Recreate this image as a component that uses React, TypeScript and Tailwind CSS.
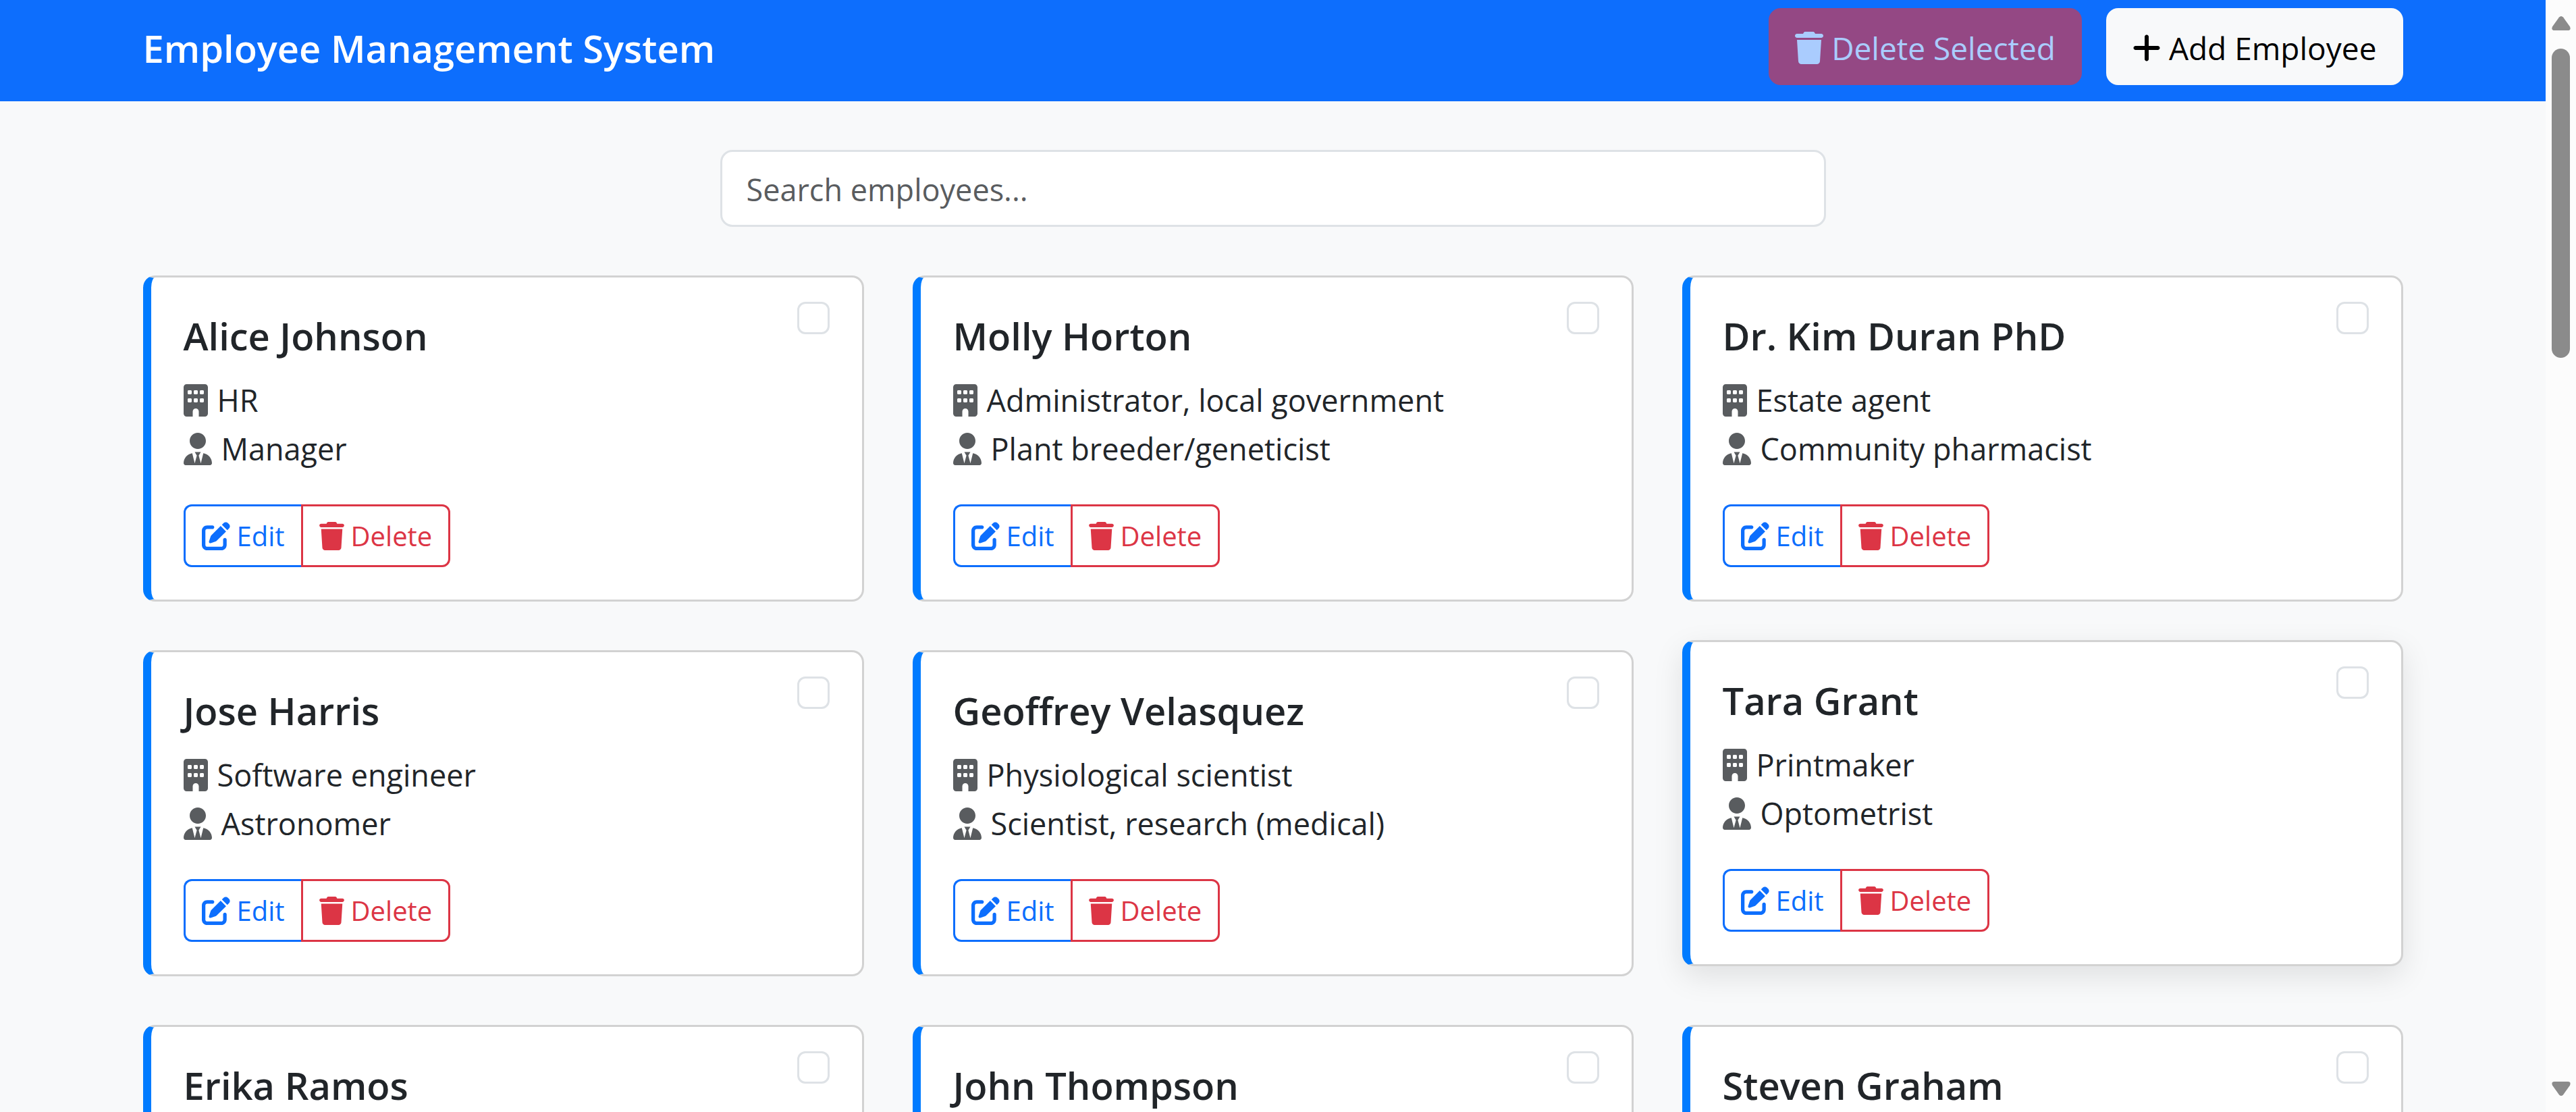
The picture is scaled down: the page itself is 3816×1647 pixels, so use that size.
import { FaBuilding, FaPenToSquare, FaPlus, FaTrash } from "react-icons/fa6";

type Employee = {
  name: string;
  department: string;
  position: string;
  raised?: boolean;
};

const employees: Employee[] = [
  { name: "Alice Johnson", department: "HR", position: "Manager" },
  { name: "Molly Horton", department: "Administrator, local government", position: "Plant breeder/geneticist" },
  { name: "Dr. Kim Duran PhD", department: "Estate agent", position: "Community pharmacist" },
  { name: "Jose Harris", department: "Software engineer", position: "Astronomer" },
  { name: "Geoffrey Velasquez", department: "Physiological scientist", position: "Scientist, research (medical)" },
  { name: "Tara Grant", department: "Printmaker", position: "Optometrist", raised: true },
  { name: "Erika Ramos", department: "Engineer", position: "Analyst" },
  { name: "John Thompson", department: "Finance", position: "Accountant" },
  { name: "Steven Graham", department: "Marketing", position: "Designer" },
];

function UserTieIcon({ className }: { className?: string }) {
  return (
    <svg viewBox="0 0 448 512" fill="currentColor" aria-hidden="true" className={className}>
      <path d="M352 128C352 198.7 294.7 256 224 256C153.3 256 96 198.7 96 128C96 57.31 153.3 0 224 0C294.7 0 352 57.31 352 128zM209.1 359.2L176 304H272L238.9 359.2L272.2 483.1L311.7 321.9C388.9 333.9 448 400.7 448 481.3C448 498.2 434.2 512 417.3 512H30.72C13.75 512 0 498.2 0 481.3C0 400.7 59.09 333.9 136.3 321.9L175.8 483.1L209.1 359.2z" />
    </svg>
  );
}

function EmployeeCard({ employee }: { employee: Employee }) {
  const lift = employee.raised ? "-translate-y-[15px] shadow-[0_15px_45px_rgba(0,0,0,0.1)]" : "";
  return (
    <article
      className={`relative rounded-[18px] border-[3px] border-l-[12px] border-[#d2d2d2] border-l-[#007bff] bg-white p-12 ${lift}`}
    >
      <input
        type="checkbox"
        aria-label={`Select ${employee.name}`}
        className="absolute top-9 right-12 size-12 appearance-none rounded-xl border-[3px] border-[#dee2e6] bg-white checked:bg-[#0d6efd]"
      />
      <h2 className="mb-5.5 pt-0.5 text-[56px] leading-[72px] font-semibold">{employee.name}</h2>
      <div className="mb-12">
        <p className="flex h-[72px] items-center gap-3.5 pt-1">
          <FaBuilding className="h-12 w-9 shrink-0 text-[#595c5f]" />
          {employee.department}
        </p>
        <p className="flex h-[72px] items-center gap-3.5 pt-1">
          <UserTieIcon className="h-12 w-[42px] shrink-0 text-[#595c5f]" />
          {employee.position}
        </p>
      </div>
      <div className="flex text-[40px] leading-[63px]">
        <button
          type="button"
          className="flex items-center gap-2.5 rounded-l-xl border-[3px] border-r-0 border-[#0d6efd] px-6 py-3 text-[#0d6efd]"
        >
          <FaPenToSquare className="size-[42px]" />
          Edit
        </button>
        <button
          type="button"
          className="flex items-center gap-2.5 rounded-r-xl border-[3px] border-[#dc3545] px-6 py-3 text-[#dc3545]"
        >
          <FaTrash className="h-[42px] w-[37px]" />
          Delete
        </button>
      </div>
    </article>
  );
}

function Scrollbar() {
  return (
    <div className="flex w-[45px] shrink-0 flex-col items-center bg-[#fcfcfc] py-6" aria-hidden="true">
      <svg viewBox="0 0 28 21" className="h-[21px] w-7" fill="#8b8b8b">
        <path d="M11 1.6Q14 -1.4 17 1.6L27 15.5Q29 21 24 21H4Q-1 21 1 15.5Z" />
      </svg>
      <div className="mt-[27px] h-[458px] w-[27px] rounded-full bg-[#8b8b8b]" />
      <svg viewBox="0 0 28 21" className="mt-auto h-[21px] w-7" fill="#8b8b8b">
        <path d="M11 19.4Q14 22.4 17 19.4L27 5.5Q29 0 24 0H4Q-1 0 1 5.5Z" />
      </svg>
    </div>
  );
}

export default function App() {
  return (
    <div className="flex h-screen overflow-hidden bg-[#f8f9fa] font-['Open_Sans',sans-serif] text-[45px] leading-[72px] text-[#212529]">
      <div className="min-w-0 flex-1 overflow-hidden">
        <header className="bg-[#0d6efd] pt-3 pb-6">
          <div className="mx-auto flex max-w-[3420px] items-center justify-between px-9">
            <a href="#" className="pt-1 text-[56px] leading-[90px] font-semibold text-white">
              Employee Management System
            </a>
            <div className="flex gap-9 text-[46px] leading-[72px]">
              <button
                type="button"
                disabled
                className="flex items-center gap-3 rounded-[18px] border-[3px] border-[#dc3545] bg-[#dc3545] px-9 pt-5 pb-4 text-white opacity-65"
              >
                <FaTrash className="h-12 w-[42px]" />
                Delete Selected
              </button>
              <button
                type="button"
                className="flex items-center gap-3 rounded-[18px] border-[3px] border-[#f8f9fa] bg-[#f8f9fa] px-9 pt-5 pb-4 text-black"
              >
                <FaPlus className="h-12 w-[42px]" />
                Add Employee
              </button>
            </div>
          </div>
        </header>
        <main className="mx-auto max-w-[3420px] px-9 py-[72px]">
          <div className="mx-auto mb-[72px] max-w-[1638px]">
            <input
              type="text"
              aria-label="Search employees"
              placeholder="Search employees..."
              className="block w-full rounded-[18px] border-[3px] border-[#dee2e6] bg-white px-9 pt-5 pb-4 leading-[72px] placeholder:text-[#595c5f]"
            />
          </div>
          <div className="grid grid-cols-3 gap-[72px]">
            {employees.map((employee) => (
              <EmployeeCard key={employee.name} employee={employee} />
            ))}
          </div>
        </main>
      </div>
      <Scrollbar />
    </div>
  );
}
